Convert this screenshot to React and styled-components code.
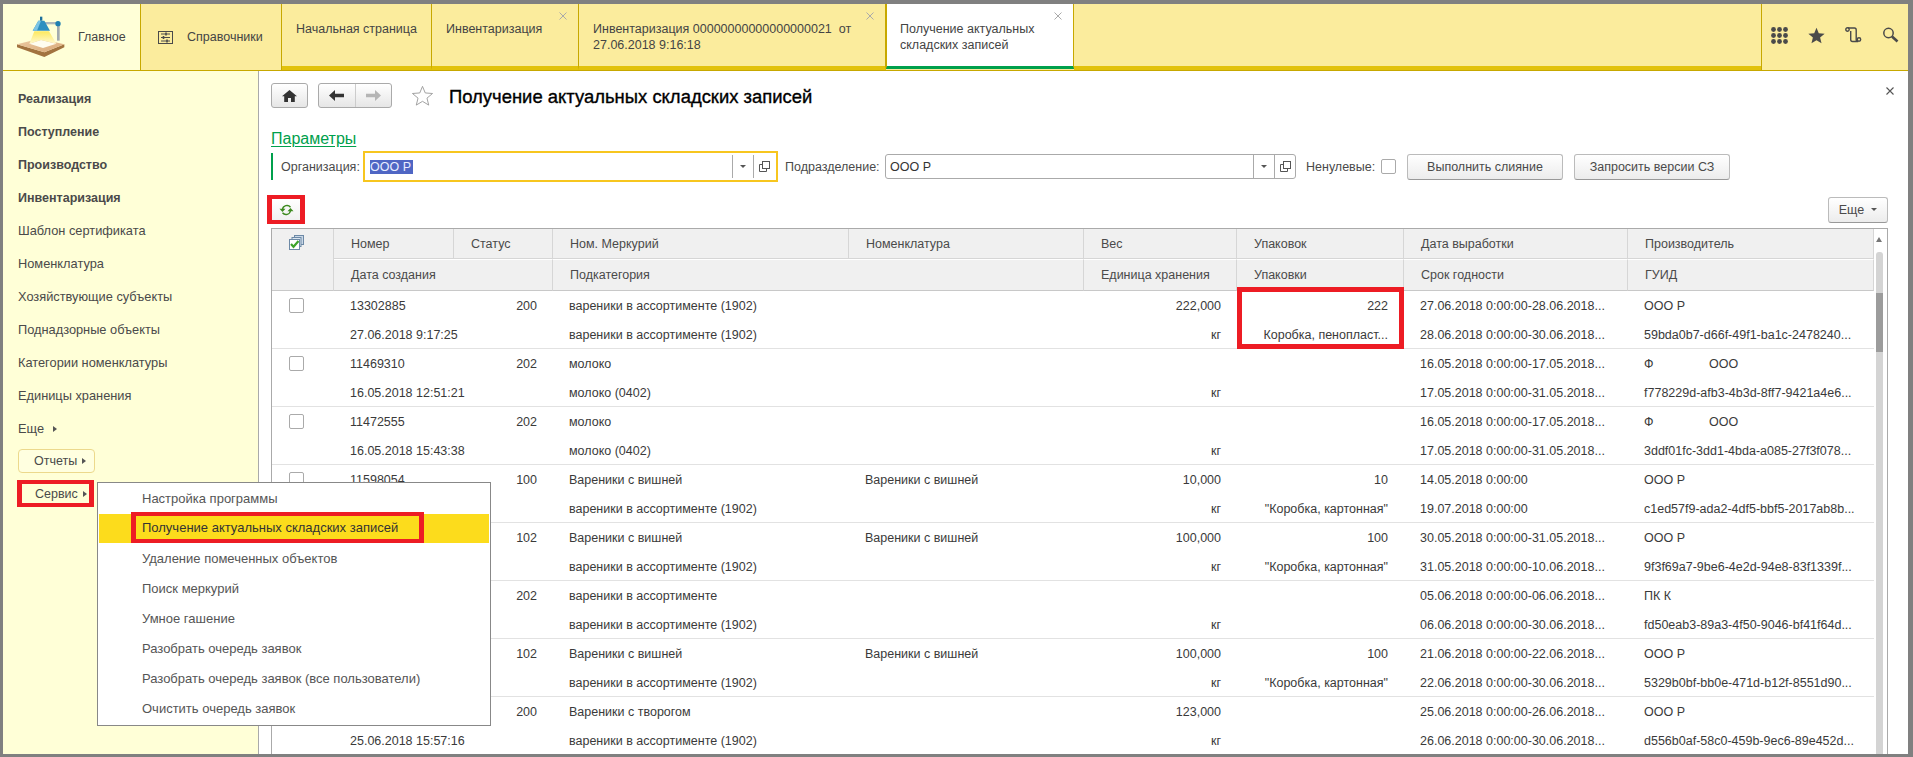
import React from "react";
import styled, { createGlobalStyle } from "styled-components";

const GOLD = "#c7a800";
const RED = "#ed1c24";

const GlobalStyle = createGlobalStyle`
  * { box-sizing: border-box; }
  html, body { margin: 0; padding: 0; height: 757px; overflow: hidden; }
  body {
    background: #808080;
    font-family: "Liberation Sans", Arial, sans-serif;
    font-size: 12.5px;
    color: #444;
  }
`;

const Frame = styled.div`
  position: relative;
  margin: 4px 5px 3px 3px;
  width: 1905px;
  height: 750px;
  display: flex;
  flex-direction: column;
  background: #fff;
  overflow: hidden;
`;

/* top section bar */
const TopBar = styled.div`
  display: flex;
  height: 67px;
  flex: none;
  background: #fbec9d;
  border-bottom: 1px solid ${GOLD};
`;

const HomeSection = styled.div`
  width: 138px;
  display: flex;
  align-items: center;
  padding-left: 13px;
  gap: 12px;
  background: #ffffd7;
  border-right: 1px solid ${GOLD};
`;

const RefSection = styled.div`
  width: 141px;
  display: flex;
  align-items: center;
  padding-left: 17px;
  gap: 14px;
  border-right: 1px solid ${GOLD};
`;

const TabStrip = styled.div`
  display: flex;
  width: 1479px;
`;

const Tab = styled.div`
  position: relative;
  width: ${(p) => p.$w}px;
  flex: none;
  padding: 17px 0 0 ${(p) => (p.$active ? 13 : 14)}px;
  line-height: 16.4px;
  white-space: pre-line;
  background: ${(p) => (p.$active ? "#fff" : "#fbec9d")};
  border-right: 1px solid ${GOLD};
  border-left: ${(p) => (p.$active ? `1px solid ${GOLD}` : "none")};
  border-bottom: ${(p) => (p.$active ? "3px solid #00a04c" : "4px solid #e2c20c")};
  margin-bottom: ${(p) => (p.$active ? "1px" : "0")};
`;

const TabFill = styled.div`
  flex: 1;
  border-bottom: 4px solid #e2c20c;
`;

const TabClose = styled.svg`
  position: absolute;
  right: 11px;
  top: 8px;
  width: 8px;
  height: 8px;
  stroke: #aaa;
  stroke-width: 1;
`;

const ToolsSection = styled.div`
  flex: 1;
  display: flex;
  align-items: center;
  padding: 0 0 4px 9px;
  gap: 20px;
  border-left: 1px solid ${GOLD};
`;

/* body */
const Main = styled.div`
  flex: 1;
  min-height: 0;
  display: flex;
`;

const Sidebar = styled.nav`
  width: 256px;
  flex: none;
  padding: 11px 0 0 15px;
  background: #ffffd7;
  border-right: 1px solid #aaa;
`;

const SideLink = styled.div`
  height: 33px;
  display: flex;
  align-items: center;
  gap: 9px;
  font-weight: ${(p) => (p.$bold ? 700 : 400)};
  font-size: ${(p) => (p.$bold ? 12.5 : 12.8)}px;
  color: #4a4a4a;
`;

const Caret = styled.i`
  width: 0;
  height: 0;
  border-left: 4px solid #555;
  border-top: 3px solid transparent;
  border-bottom: 3px solid transparent;
`;

const ReportsButton = styled.div`
  margin-top: 4px;
  width: 77px;
  height: 24px;
  display: flex;
  align-items: center;
  gap: 5px;
  padding-left: 15px;
  background: #ffffe0;
  border: 1px solid #ecd98c;
  border-radius: 4px;
  color: #4a4a4a;
`;

const ServiceButton = styled.div`
  margin: 7px 0 0 -1px;
  width: 77px;
  height: 27px;
  display: flex;
  align-items: center;
  gap: 5px;
  padding-left: 13px;
  border: 4px solid ${RED};
  border-width: 4px 5px;
  color: #4a4a4a;
`;

const Content = styled.section`
  flex: 1;
  min-width: 0;
  display: flex;
  flex-direction: column;
  padding: 12px 20px 0 12px;
`;

const HeadRow = styled.div`
  display: flex;
  align-items: center;
  height: 25px;
  flex: none;
`;

const NavButton = styled.div`
  width: ${(p) => p.$w}px;
  height: 25px;
  flex: none;
  margin-left: ${(p) => p.$ml || 0}px;
  display: flex;
  border: 1px solid #aaa;
  border-radius: 3px;
  background: linear-gradient(#fff, #e6e6e6);
  align-items: center;
  justify-content: center;
`;

const NavHalf = styled.div`
  flex: 1;
  height: 100%;
  display: flex;
  align-items: center;
  justify-content: center;
  & + & { border-left: 1px solid #ccc; }
`;

const StarWrap = styled.div`
  margin: 0 15px 0 19px;
  display: flex;
`;

const Title = styled.h1`
  margin: 2px 0 0;
  font-size: 18.45px;
  font-weight: 400;
  color: #000;
  -webkit-text-stroke: 0.35px #000;
  white-space: nowrap;
`;

const CloseForm = styled.svg`
  margin-left: auto;
  margin-right: -6px;
  margin-top: -9px;
  width: 8px;
  height: 8px;
  stroke: #555;
  stroke-width: 1.1;
`;

const ParamsLink = styled.a`
  margin-top: 21px;
  align-self: flex-start;
  font-size: 16px;
  line-height: 20px;
  color: #00a04c;
  text-decoration: underline;
  text-underline-offset: 2px;
`;

const FormRow = styled.div`
  margin-top: 2px;
  height: 31px;
  flex: none;
  display: flex;
  align-items: center;
  white-space: nowrap;
`;

const GreenMark = styled.i`
  width: 2px;
  height: 27px;
  background: #00a04c;
  margin-right: 8px;
`;

const FieldLabel = styled.span`
  width: ${(p) => p.$w}px;
  flex: none;
  margin-left: ${(p) => p.$ml || 0}px;
  color: #4a4a4a;
`;

const Field = styled.div`
  width: ${(p) => p.$w}px;
  height: ${(p) => (p.$focus ? 31 : 25)}px;
  flex: none;
  display: flex;
  align-items: center;
  padding: ${(p) => (p.$focus ? "2px 2px" : "0")};
  border: ${(p) => (p.$focus ? "2px solid #f7c61f" : "1px solid #aaa")};
  border-radius: ${(p) => (p.$focus ? 0 : 3)}px;
  color: #333;
`;

const FieldText = styled.div`
  flex: 1;
  padding-left: ${(p) => p.$pad}px;
`;

const Selected = styled.span`
  display: inline-block;
  width: 43px;
  line-height: 14px;
  background: #4f66c4;
  color: #e9edff;
`;

const FieldPart = styled.div`
  width: 21px;
  height: 100%;
  flex: none;
  display: flex;
  align-items: center;
  justify-content: center;
  border-left: 1px solid #aaa;
`;

const DownCaret = styled.i`
  width: 0;
  height: 0;
  border-top: 3px solid #555;
  border-left: 3px solid transparent;
  border-right: 3px solid transparent;
`;

const CheckBox = styled.i`
  display: block;
  width: 15px;
  height: 15px;
  flex: none;
  border: 1px solid #aaa;
  border-radius: 2px;
  background: #fff;
`;

const Button = styled.div`
  width: ${(p) => p.$w}px;
  height: 26px;
  flex: none;
  margin-left: ${(p) => p.$ml}px;
  display: flex;
  align-items: center;
  justify-content: center;
  gap: 7px;
  border: 1px solid #bbb;
  border-bottom-color: #999;
  border-radius: 3px;
  background: linear-gradient(#fff, #ececec);
  color: #4a4a4a;
`;

const ToolRow = styled.div`
  margin: 13px 0 0 -4px;
  height: 29px;
  flex: none;
  display: flex;
  align-items: center;
  justify-content: space-between;
`;

const RefreshButton = styled.div`
  width: 38px;
  height: 29px;
  display: flex;
  align-items: center;
  justify-content: center;
  border: 4px solid ${RED};
  border-width: 4px 5px;
  background: linear-gradient(#fff, #f0f0f0);
`;

/* table */
const TableBox = styled.div`
  margin-top: 4px;
  flex: 1;
  min-height: 0;
  display: flex;
  border: 1px solid #aaa;
  border-bottom: none;
  overflow: hidden;
`;

const TableCols = styled.div`
  width: 1602px;
  flex: none;
`;

const COLUMNS = "62px 120px 99px 296px 235px 153px 167px 224px 246px";

const HeadGrid = styled.div`
  display: grid;
  grid-template-columns: ${COLUMNS};
  grid-template-rows: 30px 32px;
  background: #f0f0f0;
`;

const HeadCell = styled.div`
  display: flex;
  align-items: center;
  padding-left: 17px;
  grid-column: span ${(p) => p.$span || 1};
  border-right: 1px solid #d6d6d6;
  border-bottom: 1px solid ${(p) => (p.$low ? "#c8c8c8" : "#d6d6d6")};
  border-top: ${(p) => (p.$low ? "1px solid #fff" : "none")};
  color: #4a4a4a;
`;

const CornerCell = styled.div`
  grid-row: span 2;
  padding: 6px 0 0 17px;
  border-right: 1px solid #d6d6d6;
  border-bottom: 1px solid #c8c8c8;
`;

const DataRow = styled.div`
  position: relative;
  display: grid;
  grid-template-columns: ${COLUMNS};
  grid-template-rows: 29px 28px;
  height: 58px;
  border-bottom: 1px solid #e2e2e2;
`;

const Cell = styled.div`
  grid-column: span ${(p) => p.$span || 1};
  padding: 0 16px;
  line-height: 30px;
  white-space: pre;
  text-align: ${(p) => (p.$right ? "right" : "left")};
  color: #3a3a3a;
`;

const CheckCell = styled.div`
  grid-row: span 2;
  padding: 7px 0 0 17px;
`;

const RedCell = styled.div`
  position: absolute;
  grid-column: 7 / 8;
  grid-row: 1 / 3;
  top: -4px;
  left: 0;
  right: 0;
  height: 62px;
  border: 5px solid ${RED};
`;

const ScrollCol = styled.div`
  flex: 1;
  display: flex;
  flex-direction: column;
  align-items: center;
  padding: 8px 3px 0 0;
`;

const UpCaret = styled.i`
  width: 0;
  height: 0;
  border-bottom: 5px solid #777;
  border-left: 3px solid transparent;
  border-right: 3px solid transparent;
  margin-bottom: 10px;
`;

const ScrollTrack = styled.div`
  flex: 1;
  width: 7px;
  border-radius: 3px 3px 0 0;
  background: #d4d4d4;
  padding-top: 41px;
`;

const ScrollThumb = styled.div`
  height: 59px;
  background: #9c9c9c;
`;

/* popup */
const Menu = styled.div`
  position: absolute;
  left: 94px;
  top: 478px;
  width: 394px;
  padding: 1px;
  background: #fff;
  border: 1px solid #888;
  z-index: 5;
`;

const MenuItem = styled.div`
  position: relative;
  height: ${(p) => (p.$on ? 29 : 30)}px;
  margin-bottom: ${(p) => (p.$on ? 1 : 0)}px;
  padding-left: 43px;
  font-size: 13px;
  line-height: ${(p) => (p.$on ? 28 : 30)}px;
  background: ${(p) => (p.$on ? "#fcdc1c" : "transparent")};
  color: ${(p) => (p.$on ? "#333" : "#555")};
`;

const MenuMark = styled.div`
  position: absolute;
  left: 32px;
  top: -2px;
  width: 293px;
  height: 31px;
  border: 4px solid ${RED};
  border-width: 4px 5px;
`;

const Lamp = () => (
  <svg width="50" height="44" viewBox="45 40 150 130">
    <defs>
      <linearGradient id="beam" x1="0" y1="0" x2="0" y2="1">
        <stop offset="0" stopColor="#fde95e" />
        <stop offset="1" stopColor="#fff9cf" />
      </linearGradient>
      <linearGradient id="board" x1="0" y1="0" x2="1" y2="1">
        <stop offset="0" stopColor="#eccba3" />
        <stop offset="1" stopColor="#d9a878" />
      </linearGradient>
    </defs>
    <polygon points="48,136 130,165 190,136 190,127 130,151 48,127" fill="#a2733f" />
    <polygon points="48,127 115,110 190,127 130,151" fill="url(#board)" />
    <polygon points="85,125 120,114 166,125 126,138" fill="#fffdf0" />
    <polygon points="100,88 144,88 166,125 120,114 85,125" fill="url(#beam)" />
    <rect x="130" y="60" width="40" height="7" fill="#aeb7bb" />
    <rect x="168" y="66" width="8" height="50" fill="#a3abaf" />
    <circle cx="171" cy="65" r="8" fill="#1f7fb0" />
    <polygon points="112,56 130,56 147,86 95,86" fill="#2f8fc0" />
    <polygon points="112,56 120,56 108,86 95,86" fill="#7cc4e4" />
    <rect x="117" y="44" width="7" height="12" fill="#1c6f9c" />
  </svg>
);

const RefIcon = () => (
  <svg width="15" height="13" viewBox="0 0 15 13" fill="none" stroke="#4a4a4a">
    <rect x="0.5" y="0.5" width="14" height="12" />
    <path d="M3 3h9M3 6.5h9M3 10h9" />
    <path d="M8 1.5v3M5.5 5v3M9 8.500v3" strokeWidth="1.6" />
  </svg>
);

const CloseX = () => (
  <TabClose viewBox="0 0 8 8">
    <path d="M0.500 0.500l7 7M7.500 0.500l-7 7" />
  </TabClose>
);

const AppsIcon = () => (
  <svg width="17" height="17" viewBox="0 0 17 17" fill="#4a4a4a">
    {[2.5, 8.5, 14.5].map((y) =>
      [2.5, 8.5, 14.5].map((x) => <circle key={x + "-" + y} cx={x} cy={y} r="2.4" />)
    )}
  </svg>
);

const StarFilled = () => (
  <svg width="17" height="17" viewBox="0 0 24 24" fill="#4a4a4a">
    <polygon points="12,1 15.200,8.800 23.500,9.400 17.100,14.800 19.100,23 12,18.600 4.900,23 6.900,14.800 0.500,9.400 8.800,8.800" />
  </svg>
);

const HistoryIcon = () => (
  <svg width="17" height="16" viewBox="0 0 17 16" fill="none" stroke="#4a4a4a" strokeWidth="1.4">
    <circle cx="2.500" cy="2.500" r="1.700" />
    <path d="M3 1h6.500c1.200 0 1.700.8 1.700 2v9.500c0 1 .8 2 2 2H7.500c-1 0-1.800-1-1.800-2V4" />
    <circle cx="14" cy="12.500" r="1.700" />
  </svg>
);

const SearchIcon = () => (
  <svg width="17" height="16" viewBox="0 0 17 16" fill="none" stroke="#4a4a4a">
    <circle cx="6.500" cy="6" r="4.700" strokeWidth="1.500" />
    <path d="M10 9.500l5.500 5" strokeWidth="2.600" />
  </svg>
);

const HomeIcon = () => (
  <svg width="15" height="12" viewBox="0 0 15 12" fill="#333">
    <path d="M7.500 0L15 6.300h-2.200V12H9V8H6v4H2.200V6.300H0z" />
  </svg>
);

const ArrowIcon = ({ color, flip }) => (
  <svg width="15" height="11" viewBox="0 0 15 11" fill={color}>
    <path d={flip ? "M9 0v3.700H0v3.600h9V11l6-5.500z" : "M6 0v3.700h9v3.600H6V11L0 5.500z"} />
  </svg>
);

const StarOutline = () => (
  <svg width="23" height="21" viewBox="0 0 24 23" fill="#fff" stroke="#999">
    <polygon points="12,1.500 15,8.700 23,9.300 16.900,14.400 18.800,22 12,17.900 5.200,22 7.100,14.400 1,9.300 9,8.700" />
  </svg>
);

const OpenIcon = () => (
  <svg width="11" height="11" viewBox="0 0 11 11" fill="none" stroke="#555">
    <rect x="3.500" y="0.500" width="7" height="7" />
    <path d="M3 3.500H0.500v7h7V8" />
  </svg>
);

const RefreshIcon = () => (
  <svg width="15" height="12" viewBox="0 0 15 12" fill="none" stroke="#3d8a1f" strokeWidth="1.400">
    <path d="M3.500 5.500A4.500 4.500 0 0 1 11.500 3.200" />
    <path d="M11.500 6.500A4.500 4.500 0 0 1 3.500 8.800" />
    <path d="M0.500 4.800h6L3.500 8z" fill="#3d8a1f" stroke="none" />
    <path d="M8.500 7.200h6L11.500 4z" fill="#3d8a1f" stroke="none" />
  </svg>
);

const MarkAllIcon = () => (
  <svg width="15" height="15" viewBox="0 0 15 15">
    <rect x="5.500" y="0.500" width="9" height="9" fill="#c9d7e6" stroke="#6d89a6" />
    <rect x="3" y="2.500" width="9" height="9" fill="#dbe6f0" stroke="#6d89a6" />
    <rect x="0.500" y="4.500" width="10" height="10" fill="#fff" stroke="#6d89a6" />
    <path d="M2 9l2.500 2.800L9.500 6" fill="none" stroke="#3da32a" strokeWidth="2.200" />
  </svg>
);

const tabs = [
  { w: 150, text: "Начальная страница" },
  { w: 147, text: "Инвентаризация", close: true },
  { w: 307, text: "Инвентаризация 00000000000000000021\u00a0 от\n27.06.2018 9:16:18", close: true },
  { w: 188, text: "Получение актуальных\nскладских записей", close: true, active: true },
];

const sideLinks = [
  ["Реализация", true],
  ["Поступление", true],
  ["Производство", true],
  ["Инвентаризация", true],
  ["Шаблон сертификата"],
  ["Номенклатура"],
  ["Хозяйствующие субъекты"],
  ["Поднадзорные объекты"],
  ["Категории номенклатуры"],
  ["Единицы хранения"],
];

const menuItems = [
  "Настройка программы",
  "Получение актуальных складских записей",
  "Удаление помеченных объектов",
  "Поиск меркурий",
  "Умное гашение",
  "Разобрать очередь заявок",
  "Разобрать очередь заявок (все пользователи)",
  "Очистить очередь заявок",
];

const V = "вареники в ассортименте (1902)";
const K = '"Коробка, картонная"';
const F = "Ф                ООО";
const rows = [
  { n: "13302885", s: "200", m: V, nm: "", w: "222,000", p: "222", d1: "27.06.2018 0:00:00-28.06.2018...", o: "ООО Р", c: "27.06.2018 9:17:25", sc: V, u: "кг", pk: "Коробка, пенопласт...", d2: "28.06.2018 0:00:00-30.06.2018...", g: "59bda0b7-d66f-49f1-ba1c-2478240...", red: true },
  { n: "11469310", s: "202", m: "молоко", nm: "", w: "", p: "", d1: "16.05.2018 0:00:00-17.05.2018...", o: F, c: "16.05.2018 12:51:21", sc: "молоко (0402)", u: "кг", pk: "", d2: "17.05.2018 0:00:00-31.05.2018...", g: "f778229d-afb3-4b3d-8ff7-9421a4e6..." },
  { n: "11472555", s: "202", m: "молоко", nm: "", w: "", p: "", d1: "16.05.2018 0:00:00-17.05.2018...", o: F, c: "16.05.2018 15:43:38", sc: "молоко (0402)", u: "кг", pk: "", d2: "17.05.2018 0:00:00-31.05.2018...", g: "3ddf01fc-3dd1-4bda-a085-27f3f078..." },
  { n: "11598054", s: "100", m: "Вареники с вишней", nm: "Вареники с вишней", w: "10,000", p: "10", d1: "14.05.2018 0:00:00", o: "ООО Р", c: "", sc: V, u: "кг", pk: K, d2: "19.07.2018 0:00:00", g: "c1ed57f9-ada2-4df5-bbf5-2017ab8b..." },
  { n: "", s: "102", m: "Вареники с вишней", nm: "Вареники с вишней", w: "100,000", p: "100", d1: "30.05.2018 0:00:00-31.05.2018...", o: "ООО Р", c: "", sc: V, u: "кг", pk: K, d2: "31.05.2018 0:00:00-10.06.2018...", g: "9f3f69a7-9be6-4e2d-94e8-83f1339f..." },
  { n: "", s: "202", m: "вареники в ассортименте", nm: "", w: "", p: "", d1: "05.06.2018 0:00:00-06.06.2018...", o: "ПК К", c: "", sc: V, u: "кг", pk: "", d2: "06.06.2018 0:00:00-30.06.2018...", g: "fd50eab3-89a3-4f50-9046-bf41f64d..." },
  { n: "", s: "102", m: "Вареники с вишней", nm: "Вареники с вишней", w: "100,000", p: "100", d1: "21.06.2018 0:00:00-22.06.2018...", o: "ООО Р", c: "", sc: V, u: "кг", pk: K, d2: "22.06.2018 0:00:00-30.06.2018...", g: "5329b0bf-bb0e-471d-b12f-8551d90..." },
  { n: "", s: "200", m: "Вареники с творогом", nm: "", w: "123,000", p: "", d1: "25.06.2018 0:00:00-26.06.2018...", o: "ООО Р", c: "25.06.2018 15:57:16", sc: V, u: "кг", pk: "", d2: "26.06.2018 0:00:00-30.06.2018...", g: "d556b0af-58c0-459b-9ec6-89e452d..." },
];

function App() {
  return (
    <Frame>
      <GlobalStyle />
      <TopBar>
        <HomeSection>
          <Lamp />
          <span>Главное</span>
        </HomeSection>
        <RefSection>
          <RefIcon />
          <span>Справочники</span>
        </RefSection>
        <TabStrip>
          {tabs.map((t) => (
            <Tab key={t.text} $w={t.w} $active={t.active}>
              {t.text}
              {t.close && <CloseX />}
            </Tab>
          ))}
          <TabFill />
        </TabStrip>
        <ToolsSection>
          <AppsIcon />
          <StarFilled />
          <HistoryIcon />
          <SearchIcon />
        </ToolsSection>
      </TopBar>

      <Main>
        <Sidebar>
          {sideLinks.map(([text, bold]) => (
            <SideLink key={text} $bold={bold}>{text}</SideLink>
          ))}
          <SideLink>Еще <Caret /></SideLink>
          <ReportsButton>Отчеты <Caret /></ReportsButton>
          <ServiceButton>Сервис <Caret /></ServiceButton>
        </Sidebar>

        <Content>
          <HeadRow>
            <NavButton $w={37}><HomeIcon /></NavButton>
            <NavButton $w={74} $ml={10}>
              <NavHalf><ArrowIcon color="#333" /></NavHalf>
              <NavHalf><ArrowIcon color="#b5b5b5" flip /></NavHalf>
            </NavButton>
            <StarWrap><StarOutline /></StarWrap>
            <Title>Получение актуальных складских записей</Title>
            <CloseForm viewBox="0 0 8 8"><path d="M0.500 0.500l7 7M7.500 0.500l-7 7" /></CloseForm>
          </HeadRow>

          <ParamsLink>Параметры</ParamsLink>

          <FormRow>
            <GreenMark />
            <FieldLabel $w={82}>Организация:</FieldLabel>
            <Field $focus $w={415}>
              <FieldText $pad={3}><Selected>ООО Р</Selected></FieldText>
              <FieldPart><DownCaret /></FieldPart>
              <FieldPart><OpenIcon /></FieldPart>
            </Field>
            <FieldLabel $w={100} $ml={7}>Подразделение:</FieldLabel>
            <Field $w={411}>
              <FieldText $pad={4}>ООО Р</FieldText>
              <FieldPart><DownCaret /></FieldPart>
              <FieldPart><OpenIcon /></FieldPart>
            </Field>
            <FieldLabel $w={75} $ml={10}>Ненулевые:</FieldLabel>
            <CheckBox />
            <Button $w={156} $ml={11}>Выполнить слияние</Button>
            <Button $w={156} $ml={11}>Запросить версии СЗ</Button>
          </FormRow>

          <ToolRow>
            <RefreshButton><RefreshIcon /></RefreshButton>
            <Button $w={60}>Еще <DownCaret /></Button>
          </ToolRow>

          <TableBox>
            <TableCols>
              <HeadGrid>
                <CornerCell><MarkAllIcon /></CornerCell>
                <HeadCell>Номер</HeadCell>
                <HeadCell>Статус</HeadCell>
                <HeadCell>Ном. Меркурий</HeadCell>
                <HeadCell>Номенклатура</HeadCell>
                <HeadCell>Вес</HeadCell>
                <HeadCell>Упаковок</HeadCell>
                <HeadCell>Дата выработки</HeadCell>
                <HeadCell>Производитель</HeadCell>
                <HeadCell $low $span={2}>Дата создания</HeadCell>
                <HeadCell $low $span={2}>Подкатегория</HeadCell>
                <HeadCell $low>Единица хранения</HeadCell>
                <HeadCell $low>Упаковки</HeadCell>
                <HeadCell $low>Срок годности</HeadCell>
                <HeadCell $low>ГУИД</HeadCell>
              </HeadGrid>
              {rows.map((r) => (
                <DataRow key={r.g}>
                  <CheckCell><CheckBox /></CheckCell>
                  <Cell>{r.n}</Cell>
                  <Cell $right>{r.s}</Cell>
                  <Cell>{r.m}</Cell>
                  <Cell>{r.nm}</Cell>
                  <Cell $right>{r.w}</Cell>
                  <Cell $right>{r.p}</Cell>
                  <Cell>{r.d1}</Cell>
                  <Cell>{r.o}</Cell>
                  <Cell $span={2}>{r.c}</Cell>
                  <Cell $span={2}>{r.sc}</Cell>
                  <Cell $right>{r.u}</Cell>
                  <Cell $right>{r.pk}</Cell>
                  <Cell>{r.d2}</Cell>
                  <Cell>{r.g}</Cell>
                  {r.red && <RedCell />}
                </DataRow>
              ))}
            </TableCols>
            <ScrollCol>
              <UpCaret />
              <ScrollTrack><ScrollThumb /></ScrollTrack>
            </ScrollCol>
          </TableBox>
        </Content>
      </Main>

      <Menu>
        {menuItems.map((text, i) => (
          <MenuItem key={text} $on={i === 1}>
            {text}
            {i === 1 && <MenuMark />}
          </MenuItem>
        ))}
      </Menu>
    </Frame>
  );
}

export default App;
